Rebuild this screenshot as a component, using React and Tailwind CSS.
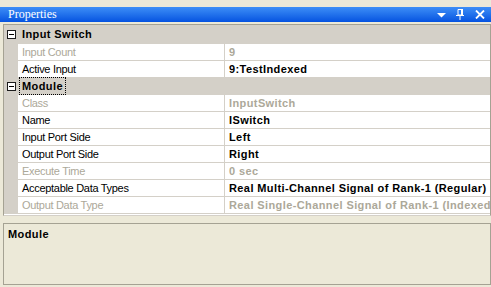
import React from 'react';

const font = { fontFamily: '"Liberation Sans", Arial, sans-serif' };

const groups = [
    {
        name: 'Input Switch',
        rows: [
            { label: 'Input Count', value: '9', disabled: true },
            { label: 'Active Input', value: '9:TestIndexed' },
        ],
    },
    {
        name: 'Module',
        focused: true,
        rows: [
            { label: 'Class', value: 'InputSwitch', disabled: true },
            { label: 'Name', value: 'ISwitch' },
            { label: 'Input Port Side', value: 'Left' },
            { label: 'Output Port Side', value: 'Right' },
            { label: 'Execute Time', value: '0 sec', disabled: true },
            { label: 'Acceptable Data Types', value: 'Real Multi-Channel Signal of Rank-1 (Regular) Real Single-Channel Signal' },
            { label: 'Output Data Type', value: 'Real Single-Channel Signal of Rank-1 (Indexed)', disabled: true },
        ],
    },
];

const MinusBox = () => (
    <div className="w-[9px] h-[9px] border border-[#1c1c1c] bg-white flex items-center justify-center">
        <div className="w-[5px] h-px bg-black" />
    </div>
);

const TitleIcons = () => (
    <div className="flex items-center gap-[8px] pr-[6px]">
        <svg width="9" height="5" viewBox="0 0 9 5" className="mt-[2px]">
            <path d="M0 0H9L4.5 4.5Z" fill="white" />
        </svg>
        <svg width="8" height="11" viewBox="0 0 8 11" className="ml-[2px]">
            <path d="M2 0.5H5.5V6H2Z" fill="none" stroke="white" />
            <rect x="5" y="0" width="2" height="6.5" fill="white" />
            <rect x="0" y="6" width="8" height="1" fill="white" />
            <rect x="3.5" y="7" width="1" height="4" fill="white" />
        </svg>
        <svg width="10" height="9" viewBox="0 0 10 9" className="ml-[3px]">
            <path d="M1 0.5L9 8.5M9 0.5L1 8.5" stroke="white" strokeWidth="1.8" />
        </svg>
    </div>
);

const PropRow = ({ label, value, disabled }) => (
    <div className="flex h-[17px] border-b border-[#d4d0c8]">
        <div className="w-[14px] shrink-0 bg-[#d4d0c8]" />
        <div className={`w-[207px] shrink-0 bg-white border-r border-[#d4d0c8] pl-[4px] leading-[16px] tracking-[-0.3px] whitespace-nowrap overflow-hidden ${disabled ? 'text-[#aca899]' : 'text-black'}`}>
            {label}
        </div>
        <div className={`flex-1 min-w-0 bg-white pl-[4px] leading-[16px] tracking-[0.4px] whitespace-nowrap overflow-hidden font-bold ${disabled ? 'text-[#aca899]' : 'text-black'}`}>
            {value}
        </div>
    </div>
);

const Category = ({ name, focused, tall }) => (
    <div className={`flex items-center bg-[#d4d0c8] border-b border-[#d4d0c8] ${tall ? 'h-[19px]' : 'h-[17px]'}`}>
        <div className="w-[14px] shrink-0 flex items-center justify-center pl-[1px]">
            <MinusBox />
        </div>
        <div className={`ml-[2px] px-[2px] leading-[16px] font-bold tracking-[0.4px] text-black ${focused ? 'outline outline-1 outline-dotted outline-black' : ''}`}>
            {name}
        </div>
    </div>
);

const App = () => {
    return (
        <div className="w-[491px] h-[287px] bg-[#ece9d8] flex flex-col text-[11px] overflow-hidden" style={font}>
            {/* Title bar */}
            <div className="mt-[7px] h-[15px] bg-gradient-to-b from-[#3d8ef7] to-[#0552e0] flex items-center justify-between">
                <span className="pl-[8px] text-white text-[12px] leading-[15px]" style={{ fontFamily: '"Liberation Serif", serif' }}>
                    Properties
                </span>
                <TitleIcons />
            </div>

            {/* Property grid */}
            <div className="mt-[2px] ml-[3px] border border-[#a5a293] border-b-[#d4d0c8] bg-white">
                {groups.map((g, i) => (
                    <div key={g.name}>
                        <Category name={g.name} focused={g.focused} tall={i === 0} />
                        {g.rows.map((r) => (
                            <PropRow key={r.label} {...r} />
                        ))}
                    </div>
                ))}
                <div className="h-px bg-white" />
            </div>

            {/* Description pane */}
            <div className="mt-[7px] ml-[3px] h-[62px] border border-[#a5a293] px-[4px] pt-[4px]">
                <div className="font-bold tracking-[0.4px] text-black leading-[13px]">Module</div>
            </div>
        </div>
    );
};

export default App;
